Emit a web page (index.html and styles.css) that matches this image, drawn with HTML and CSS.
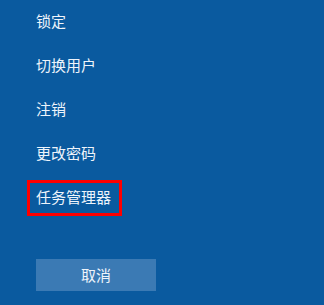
FILE: index.html
```html
<!DOCTYPE html>
<html lang="zh-CN">
<head>
<meta charset="utf-8">
<title>安全选项</title>
<link rel="stylesheet" href="styles.css">
</head>
<body>
<main class="screen">
  <ul class="options">
    <li class="option">锁定</li>
    <li class="option">切换用户</li>
    <li class="option">注销</li>
    <li class="option">更改密码</li>
    <li class="option option-marked">任务管理器</li>
  </ul>
  <button class="cancel" type="button">取消</button>
</main>
</body>
</html>
```
FILE: styles.css
```css
html, body {
  margin: 0;
  padding: 0;
}
body {
  width: 324px;
  height: 305px;
  overflow: hidden;
  background: #0a5a9f;
  font-family: "Noto Sans CJK SC", "Microsoft YaHei", "Noto Sans", sans-serif;
  color: #eef4fb;
}
.screen {
  display: flex;
  flex-direction: column;
  align-items: flex-start;
  padding: 10px 0 0 36px;
}
.options {
  list-style: none;
  margin: 0;
  padding: 0;
  display: flex;
  flex-direction: column;
  align-items: flex-start;
  gap: 22px;
}
.option {
  font-size: 15px;
  line-height: 22px;
  height: 22px;
  white-space: nowrap;
}
.option-marked {
  position: relative;
}
.option-marked::after {
  content: "";
  position: absolute;
  left: -9px;
  right: -11px;
  top: -6px;
  bottom: -8px;
  border: 3px solid #ff0000;
}
.cancel {
  margin-top: 51px;
  width: 120px;
  height: 32px;
  border: none;
  padding: 0;
  background: #3b7ab4;
  color: #eef4fb;
  font-family: inherit;
  font-size: 15px;
  line-height: 32px;
}
```
